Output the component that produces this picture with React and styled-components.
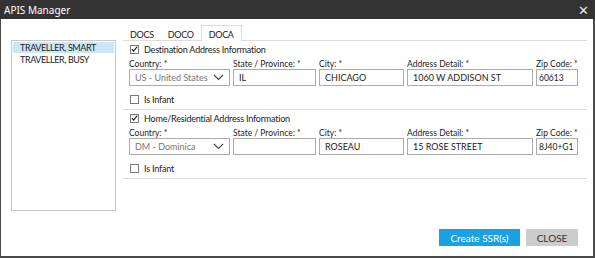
import React from 'react';
import styled, { createGlobalStyle } from 'styled-components';

const Global = createGlobalStyle`
  body {
    margin: 0;
    background: #ffffff;
    font-family: 'Lato', 'Noto Sans', sans-serif;
  }
`;

const Window = styled.div`
  width: 595px;
  height: 258px;
  box-sizing: border-box;
  border-left: 1px solid #4a4a4a;
  border-right: 2px solid #4a4a4a;
  border-bottom: 2px solid #4a4a4a;
  display: flex;
  flex-direction: column;
  background: #fff;
`;

const TitleBar = styled.div`
  height: 19px;
  background: #333333;
  color: #fff;
  font-family: 'Noto Sans', sans-serif;
  font-size: 10px;
  display: flex;
  align-items: center;
  justify-content: space-between;
  padding: 0 4px 0 4px;
  margin-left: -1px;
  margin-right: -2px;
`;

const CloseX = styled.span`
  font-size: 13px;
  color: #e8e8e8;
  padding-right: 2px;
`;

const Body = styled.div`
  flex: 1;
  display: flex;
  padding: 5px 6px 0 10px;
  gap: 7px;
`;

const TravellerList = styled.div`
  margin-top: 16px;
  width: 105px;
  height: 171px;
  box-sizing: border-box;
  border: 1px solid #c8c8c8;
  padding: 1px;
`;

const Traveller = styled.div`
  font-size: 9px;
  letter-spacing: -0.4px;
  color: #222;
  height: 11px;
  line-height: 11px;
  padding-left: 7px;
  background: ${(p) => (p.selected ? '#cde6f7' : 'transparent')};
  margin-bottom: 1px;
`;

const Panel = styled.div`
  flex: 1;
  display: flex;
  flex-direction: column;
`;

const TabStrip = styled.div`
  display: flex;
  height: 16px;
  align-items: flex-end;
  border-bottom: 1px solid #dcdcdc;
`;

const Tab = styled.div`
  font-size: 9px;
  letter-spacing: -0.3px;
  color: #222;
  height: ${(p) => (p.active ? '16px' : '13px')};
  line-height: 13px;
  box-sizing: border-box;
  padding: ${(p) => (p.active ? '2px 7px 0' : '0 6px')};
  border: 1px solid ${(p) => (p.active ? '#dcdcdc' : 'transparent')};
  border-bottom: none;
  background: #fff;
  margin-bottom: ${(p) => (p.active ? '-1px' : '0')};
`;

const Section = styled.div`
  border-bottom: 1px solid #dcdcdc;
  padding: 2px 0 4px 6px;
`;

const CheckRow = styled.label`
  display: flex;
  align-items: center;
  gap: 5px;
  font-size: 9px;
  letter-spacing: -0.2px;
  color: #222;
  height: 12px;
  margin: ${(p) => p.margin || '0'};
  padding-left: 1px;
`;

const Box = styled.span`
  width: 9px;
  height: 9px;
  box-sizing: border-box;
  border: 1px solid #7a7a7a;
  background: #fff;
  display: inline-flex;
  align-items: center;
  justify-content: center;
`;

const Fields = styled.div`
  display: flex;
  gap: 3px;
  margin-top: 5px;
`;

const Field = styled.div`
  display: flex;
  flex-direction: column;
  width: ${(p) => p.w}px;
`;

const Label = styled.div`
  font-size: 8.5px;
  color: #222;
  height: 9px;
  line-height: 9px;
  white-space: nowrap;
`;

const Input = styled.div`
  height: 17px;
  box-sizing: border-box;
  border: 1px solid #acacac;
  font-size: ${(p) => p.size || 9}px;
  color: ${(p) => (p.muted ? '#777' : '#222')};
  display: flex;
  align-items: center;
  justify-content: space-between;
  padding: 0 ${(p) => p.pad || 5}px;
  white-space: nowrap;
  overflow: hidden;
`;

const Footer = styled.div`
  display: flex;
  justify-content: flex-end;
  gap: 6px;
  padding: 0 15px 10px 0;
`;

const Button = styled.div`
  height: 17px;
  width: ${(p) => p.w}px;
  background: ${(p) => (p.primary ? '#1ba1e2' : '#cccccc')};
  color: ${(p) => (p.primary ? '#fff' : '#333')};
  font-size: 10px;
  display: flex;
  align-items: center;
  justify-content: center;
`;

const Check = () => (
  <svg width="8" height="8" viewBox="0 0 8 8">
    <path d="M1 4.2 L3 6.3 L7 1.2" fill="none" stroke="#222" strokeWidth="1.3" />
  </svg>
);

const Chevron = () => (
  <svg width="11" height="7" viewBox="0 0 11 7">
    <path d="M1 1 L5.5 5.5 L10 1" fill="none" stroke="#444" strokeWidth="1.1" />
  </svg>
);

const AddressSection = ({ title, country, state, city, detail, zip }) => (
  <Section>
    <CheckRow>
      <Box>
        <Check />
      </Box>
      {title}
    </CheckRow>
    <Fields>
      <Field w={101}>
        <Label>Country: *</Label>
        <Input muted>
          {country}
          <Chevron />
        </Input>
      </Field>
      <Field w={83}>
        <Label>State / Province: *</Label>
        <Input>{state}</Input>
      </Field>
      <Field w={85}>
        <Label>City: *</Label>
        <Input>{city}</Input>
      </Field>
      <Field w={126}>
        <Label>Address Detail: *</Label>
        <Input>{detail}</Input>
      </Field>
      <Field w={42}>
        <Label>Zip Code: *</Label>
        <Input pad={2} size={8.5}>{zip}</Input>
      </Field>
    </Fields>
    <CheckRow margin="7px 0 0 0">
      <Box />
      Is Infant
    </CheckRow>
  </Section>
);

export default function App() {
  return (
    <>
      <Global />
      <Window>
        <TitleBar>
          <span>APIS Manager</span>
          <CloseX>✕</CloseX>
        </TitleBar>
        <Body>
          <TravellerList>
            <Traveller selected>TRAVELLER, SMART</Traveller>
            <Traveller>TRAVELLER, BUSY</Traveller>
          </TravellerList>
          <Panel>
            <TabStrip>
              <Tab>DOCS</Tab>
              <Tab>DOCO</Tab>
              <Tab active>DOCA</Tab>
            </TabStrip>
            <AddressSection
              title="Destination Address Information"
              country="US - United States"
              state="IL"
              city="CHICAGO"
              detail="1060 W ADDISON ST"
              zip="60613"
            />
            <AddressSection
              title="Home/Residential Address Information"
              country="DM - Dominica"
              state=""
              city="ROSEAU"
              detail="15 ROSE STREET"
              zip="8J40+G1"
            />
          </Panel>
        </Body>
        <Footer>
          <Button primary w={81}>Create SSR(s)</Button>
          <Button w={52}>CLOSE</Button>
        </Footer>
      </Window>
    </>
  );
}
